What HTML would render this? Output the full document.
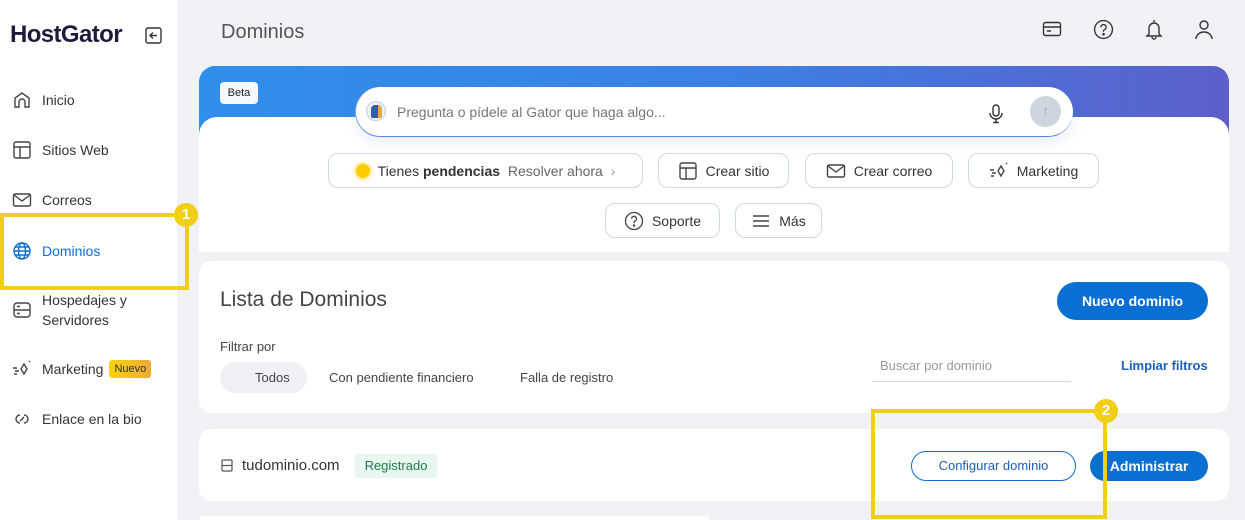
<!DOCTYPE html>
<html><head><meta charset="utf-8"><style>
*{box-sizing:border-box;margin:0;padding:0}
html,body{width:1245px;height:520px;overflow:hidden}
body{background:#f1f2f6;font-family:"Liberation Sans",sans-serif;color:#333;position:relative}
.abs{position:absolute}
.side{left:0;top:0;width:177px;height:520px;background:#fff}
.logo{left:10px;top:21px;font-size:24px;font-weight:bold;color:#1d1d3b;letter-spacing:-0.6px}
.nav{left:12px;font-size:14px;color:#333;display:flex;align-items:center}
.nav svg{width:20px;height:20px;margin-right:10px;flex:none}
.card{background:#fff;border-radius:12px}
.btn{position:absolute;border:1px solid #cfd8e3;border-radius:10px;height:35px;display:flex;align-items:center;justify-content:center;font-size:14px;color:#333;background:#fff;gap:8px}
.btn svg{width:20px;height:20px}
.ybox{border:4px solid #f2cf17}
.badge{width:24px;height:24px;border-radius:50%;background:#f2cf17;color:#fff;font-weight:bold;font-size:15px;text-align:center;line-height:24px}
</style></head><body>
<div class="abs side"></div>
<div class="abs logo">HostGator</div>
<svg class="abs" style="left:145px;top:27px" width="17" height="17" viewBox="0 0 17 17" fill="none" stroke="#333" stroke-width="1.4"><rect x="1" y="1" width="15" height="15" rx="2"/><path d="M12 8.5H5M8 5.5L5 8.5 8 11.5"/></svg>

<div class="abs nav" style="top:90px"><svg viewBox="0 0 20 20" fill="none" stroke="#444" stroke-width="1.4"><path d="M3 17V8l7-5 7 5v9h-4v-5a3 3 0 0 0-6 0v5z"/></svg>Inicio</div>
<div class="abs nav" style="top:140px"><svg viewBox="0 0 20 20" fill="none" stroke="#444" stroke-width="1.4"><rect x="2" y="2" width="16" height="16" rx="2"/><path d="M2 7h16M8 7v11"/></svg>Sitios Web</div>
<div class="abs nav" style="top:190px"><svg viewBox="0 0 20 20" fill="none" stroke="#444" stroke-width="1.4"><rect x="1.5" y="4" width="17" height="12" rx="1.5"/><path d="M2 5l8 6 8-6"/></svg>Correos</div>
<div class="abs nav" style="top:241px;color:#0d6fd6"><svg viewBox="0 0 20 20" fill="none" stroke="#0d6fd6" stroke-width="1.4"><circle cx="10" cy="10" r="8"/><ellipse cx="10" cy="10" rx="3.5" ry="8"/><path d="M2 10h16M3.5 6h13M3.5 14h13"/></svg>Dominios</div>
<div class="abs nav" style="top:290px;line-height:20px"><svg viewBox="0 0 20 20" fill="none" stroke="#444" stroke-width="1.4"><rect x="2" y="3" width="16" height="14" rx="3"/><path d="M2 10h16M5 6.5h3M5 13.5h3"/></svg>Hospedajes y<br>Servidores</div>
<div class="abs nav" style="top:359px"><svg viewBox="0 0 20 20" fill="none" stroke="#444" stroke-width="1.4"><path d="M12 5l3 5-3 5-3-5z M1 9h4M3 12h4M2 15h3M17 3l1-1"/></svg>Marketing<span style="margin-left:6px;background:linear-gradient(90deg,#f7d40b,#eeaa3a);font-size:11px;padding:3px 5px;border-radius:3px;color:#333">Nuevo</span></div>
<div class="abs nav" style="top:409px"><svg viewBox="0 0 20 20" fill="none" stroke="#444" stroke-width="1.4"><path d="M8 6a4 4 0 1 0 0 8M12 14a4 4 0 1 0 0-8M8 12l4-4"/></svg>Enlace en la bio</div>

<div class="abs" style="left:221px;top:21px;font-size:20px;color:#555">Dominios</div>
<svg class="abs" style="left:1042px;top:19px" width="20" height="20" viewBox="0 0 20 20" fill="none" stroke="#333" stroke-width="1.4"><rect x="1.5" y="3.5" width="17" height="13" rx="2"/><path d="M1.5 8h17M5 12h4"/></svg>
<svg class="abs" style="left:1093px;top:19px" width="21" height="21" viewBox="0 0 20 20" fill="none" stroke="#333" stroke-width="1.3"><circle cx="10" cy="10" r="8.5"/><path d="M7.5 7.8a2.5 2.5 0 1 1 3.5 2.3c-.7.3-1 .8-1 1.5v.6"/><circle cx="10" cy="14.5" r=".6" fill="#333"/></svg>
<svg class="abs" style="left:1144px;top:18px" width="20" height="22" viewBox="0 0 20 22" fill="none" stroke="#333" stroke-width="1.4"><path d="M10 2v2M5 16V10a5 5 0 0 1 10 0v6l2 2H3zM8 19a2 2 0 0 0 4 0"/></svg>
<svg class="abs" style="left:1194px;top:19px" width="20" height="21" viewBox="0 0 20 21" fill="none" stroke="#333" stroke-width="1.4"><circle cx="10" cy="6" r="4"/><path d="M2 20a8 7 0 0 1 16 0"/></svg>

<div class="abs" style="left:199px;top:66px;width:1030px;height:186px;border-radius:16px 16px 0 0;background:linear-gradient(90deg,#2f8fea 0%,#3b82e4 50%,#5d5fcc 100%)"></div>
<div class="abs" style="left:199px;top:117px;width:1030px;height:135px;background:#fff;border-radius:18px 18px 0 0"></div>
<div class="abs" style="left:220px;top:82px;width:38px;height:22px;background:#f4f7fb;border-radius:4px;font-size:11px;text-align:center;line-height:22px;color:#222">Beta</div>
<div class="abs" style="left:355px;top:87px;width:718px;height:50px;background:#fff;border-radius:25px;border-bottom:1.5px solid #5a8ae0;border-left:1px solid #7aa6e8;box-shadow:0 6px 14px rgba(80,120,200,.12)"></div>
<div class="abs" style="left:366px;top:101px;width:20px;height:20px;border-radius:50%;border:1px solid #ccd;background:#eef2f8"><div style="margin:3px 0 0 4px;width:11px;height:13px;background:#2f5fb0;border-radius:4px 4px 2px 2px;border-right:4px solid #f0a330"></div></div>
<div class="abs" style="left:397px;top:104px;font-size:14px;color:#777">Pregunta o pídele al Gator que haga algo...</div>
<svg class="abs" style="left:987px;top:104px" width="18" height="20" viewBox="0 0 18 20" fill="none" stroke="#333" stroke-width="1.4"><rect x="6" y="1" width="6" height="11" rx="3"/><path d="M3 9a6 6 0 0 0 12 0M9 15v3M6 18.5h6"/></svg>
<div class="abs" style="left:1030px;top:96px;width:31px;height:31px;border-radius:50%;background:#cdd6de;color:#9aa;text-align:center;line-height:30px;font-size:13px">↑</div>

<div class="btn" style="left:328px;top:153px;width:315px"><span style="width:14px;height:14px;border-radius:50%;background:#fc0;box-shadow:0 0 6px #fc0"></span><span>Tienes <b>pendencias</b> <span style="color:#666;margin-left:4px">Resolver ahora</span> <span style="color:#999;margin-left:4px">›</span></span></div>
<div class="btn" style="left:658px;top:153px;width:131px"><svg viewBox="0 0 20 20" fill="none" stroke="#444" stroke-width="1.4"><rect x="2" y="2" width="16" height="16" rx="2"/><path d="M2 7h16M8 7v11"/></svg>Crear sitio</div>
<div class="btn" style="left:805px;top:153px;width:148px"><svg viewBox="0 0 20 20" fill="none" stroke="#444" stroke-width="1.4"><rect x="1.5" y="4" width="17" height="12" rx="1.5"/><path d="M2 5l8 6 8-6"/></svg>Crear correo</div>
<div class="btn" style="left:968px;top:153px;width:131px"><svg viewBox="0 0 20 20" fill="none" stroke="#444" stroke-width="1.4"><path d="M12 5l3 5-3 5-3-5z M1 9h4M3 12h4M2 15h3M17 3l1-1"/></svg>Marketing</div>
<div class="btn" style="left:605px;top:203px;width:115px"><svg viewBox="0 0 20 20" fill="none" stroke="#444" stroke-width="1.3"><circle cx="10" cy="10" r="8.5"/><path d="M7.5 7.8a2.5 2.5 0 1 1 3.5 2.3c-.7.3-1 .8-1 1.5v.6"/><circle cx="10" cy="14.5" r=".6" fill="#444"/></svg>Soporte</div>
<div class="btn" style="left:735px;top:203px;width:87px"><svg viewBox="0 0 20 20" fill="none" stroke="#444" stroke-width="1.5"><path d="M2 5h16M2 10h16M2 15h16"/></svg>Más</div>

<div class="abs card" style="left:199px;top:261px;width:1030px;height:152px"></div>
<div class="abs" style="left:220px;top:288px;font-size:21px;color:#444">Lista de Dominios</div>
<div class="abs" style="left:1057px;top:282px;width:151px;height:38px;border-radius:19px;background:#0a6fd3;color:#fff;font-weight:bold;font-size:14px;text-align:center;line-height:38px">Nuevo dominio</div>
<div class="abs" style="left:220px;top:339px;font-size:13px;color:#444">Filtrar por</div>
<div class="abs" style="left:220px;top:362px;width:87px;height:31px;border-radius:16px;background:#eef0f4"></div>
<div class="abs" style="left:255px;top:370px;font-size:13px;color:#444">Todos</div>
<div class="abs" style="left:329px;top:370px;font-size:13px;color:#444">Con pendiente financiero</div>
<div class="abs" style="left:520px;top:370px;font-size:13px;color:#444">Falla de registro</div>
<div class="abs" style="left:872px;top:358px;width:199px;height:24px;border-bottom:1px solid #cfd6de;font-size:13px;color:#999;padding-left:8px">Buscar por dominio</div>
<div class="abs" style="left:1121px;top:358px;font-size:13px;color:#1a5fb8;font-weight:bold">Limpiar filtros</div>

<div class="abs card" style="left:199px;top:429px;width:1030px;height:72px"></div>
<svg class="abs" style="left:221px;top:459px" width="12" height="13" viewBox="0 0 12 13" fill="none" stroke="#555" stroke-width="1.2"><rect x="1" y="1" width="10" height="11" rx="1"/><path d="M1 6.5h10"/></svg>
<div class="abs" style="left:242px;top:457px;font-size:15px;color:#333">tudominio.com</div>
<div class="abs" style="left:355px;top:454px;width:82px;height:24px;background:#e8f7ef;color:#1d7a4a;font-size:13px;text-align:center;line-height:24px;border-radius:3px">Registrado</div>
<div class="abs" style="left:911px;top:451px;width:165px;height:30px;border:1px solid #0a6fd3;border-radius:15px;color:#1a5fb8;font-size:13px;text-align:center;line-height:28px">Configurar dominio</div>
<div class="abs" style="left:1090px;top:451px;width:118px;height:30px;background:#0a6fd3;border-radius:15px;color:#fff;font-weight:bold;font-size:14px;text-align:center;line-height:30px">Administrar</div>
<div class="abs card" style="left:199px;top:516px;width:511px;height:4px;border-radius:4px 4px 0 0"></div>

<div class="abs ybox" style="left:0;top:213px;width:189px;height:77px"></div>
<div class="abs badge" style="left:174px;top:203px">1</div>
<div class="abs ybox" style="left:871px;top:409px;width:236px;height:110px"></div>
<div class="abs badge" style="left:1094px;top:399px">2</div>
</body></html>
